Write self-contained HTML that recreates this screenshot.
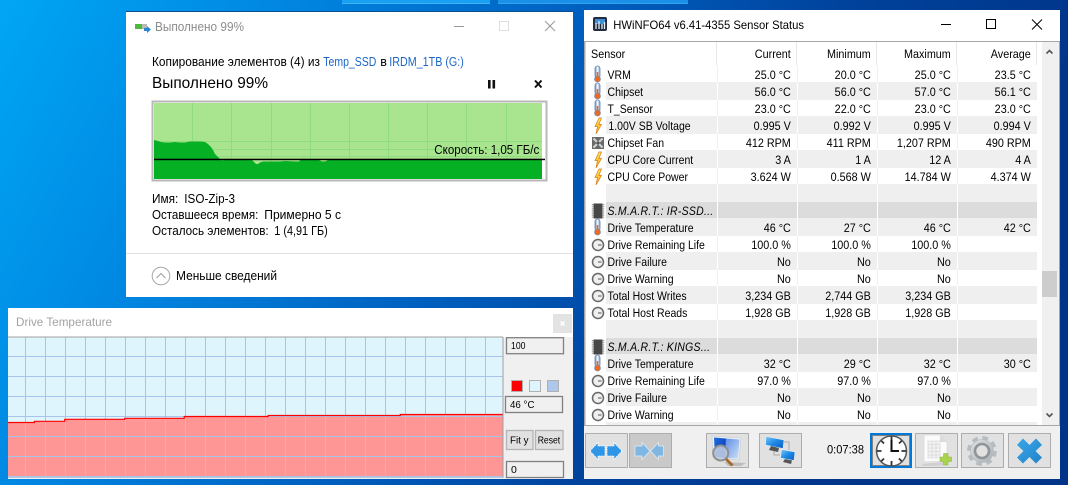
<!DOCTYPE html>
<html lang="ru"><head><meta charset="utf-8"><title>Screens</title>
<style>
html,body{margin:0;padding:0;width:1068px;height:485px;overflow:hidden;background:#0060c0}
svg{display:block;font-family:"Liberation Sans",sans-serif;font-size:12px;fill:#000}
</style></head><body>
<svg xmlns="http://www.w3.org/2000/svg" width="1068" height="485" viewBox="0 0 1068 485">
<defs>
<linearGradient id="bg" x1="0" y1="0" x2="1" y2="0.25">
<stop offset="0" stop-color="#00a6f4"/><stop offset=".25" stop-color="#0087e2"/><stop offset=".5" stop-color="#0062c2"/><stop offset=".75" stop-color="#00429c"/><stop offset="1" stop-color="#003488"/>
</linearGradient>
<linearGradient id="tube" x1="0" y1="0" x2="1" y2="0"><stop offset="0" stop-color="#5f86bb"/><stop offset=".5" stop-color="#ffffff"/><stop offset="1" stop-color="#7c9bc8"/></linearGradient>
<linearGradient id="boltg" x1="0" y1="0" x2="0" y2="1"><stop offset="0" stop-color="#ffe95a"/><stop offset="1" stop-color="#f8a818"/></linearGradient>
<linearGradient id="blueg" x1="0" y1="0" x2="1" y2="1"><stop offset="0" stop-color="#1f6fe0"/><stop offset="1" stop-color="#0a2fae"/></linearGradient>
<linearGradient id="netg" x1="0" y1="0" x2="1" y2="1"><stop offset="0" stop-color="#7cc6f4"/><stop offset=".5" stop-color="#1c8ae6"/><stop offset="1" stop-color="#0c5cc0"/></linearGradient>
<linearGradient id="lightg" x1="0" y1="0" x2="1" y2="1"><stop offset="0" stop-color="#5f8fe8"/><stop offset="1" stop-color="#cfe0f6"/></linearGradient>
<linearGradient id="xg" x1="0" y1="0" x2="1" y2="1"><stop offset="0" stop-color="#3aa6ea"/><stop offset="1" stop-color="#2283c8"/></linearGradient>
<linearGradient id="gearg" x1="0" y1="0" x2="1" y2="1"><stop offset="0" stop-color="#dfe2e4"/><stop offset="1" stop-color="#a8aeb2"/></linearGradient>
<symbol id="th" overflow="visible"><rect x="-2.5" y="-8" width="5" height="12" rx="2.5" fill="url(#tube)" stroke="#5f82b6" stroke-width=".8"/><rect x="-.8" y="-2" width="1.6" height="6" fill="#e8641a"/><circle cx="0" cy="5" r="3" fill="#ee6a1c" stroke="#7c8fb0" stroke-width=".7"/></symbol>
<symbol id="bo" overflow="visible"><path d="M1-8-3 .5H-.5L-2 8 3.500-1.500H.8L3.500-8Z" fill="url(#boltg)" stroke="#d87a14" stroke-width=".7"/></symbol>
<symbol id="ga" overflow="visible"><circle r="5.500" fill="#efefef" stroke="#666" stroke-width="1.500"/><path d="M0 0H3.500" stroke="#555" stroke-width="1"/></symbol>
<symbol id="fa" overflow="visible"><rect x="-6" y="-6" width="12" height="12" fill="#6a6a6a"/><path d="M0 0-4.500-4.500M0 0 4.500-4.500M0 0-4.500 4.500M0 0 4.500 4.500" stroke="#d6d6d6" stroke-width="2"/><circle r="1.600" fill="#555"/></symbol>
<symbol id="ch" overflow="visible"><rect x="-4.500" y="-7.500" width="9" height="15" fill="#474747"/><path d="M-5.500-7V7M5.500-7V7" stroke="#9a9a9a" stroke-width="1.400" stroke-dasharray="1.200 .9"/></symbol>
</defs>

<rect width="1068" height="485" fill="url(#bg)"/>
<rect x="342" y="0" width="148" height="3" fill="#1aa0f2"/><rect x="342" y="3" width="148" height="1" fill="#3fb4f4"/>
<rect x="498" y="0" width="190" height="3" fill="#1a90e8"/><rect x="498" y="3" width="190" height="1" fill="#30a4ee"/>

<!-- Copy window -->
<rect x="126" y="11" width="447" height="1" fill="#0a4f90"/>
<rect x="126" y="12" width="447" height="285" fill="#fff"/>
<rect x="135" y="24" width="7" height="5" fill="#4cbb3c"/><rect x="142" y="24" width="5" height="5" fill="#b9b9b9"/>
<path d="M144 28h3v-2l4 3.500-4 3.500v-2h-3z" fill="#2a86d8"/>
<g font-size="12.500">
<text x="155" y="31" fill="#8c8c8c" textLength="89" lengthAdjust="spacingAndGlyphs">Выполнено 99%</text>
<text x="152" y="66" textLength="168" lengthAdjust="spacingAndGlyphs">Копирование элементов (4) из</text>
<text x="323.300" y="66" fill="#1c66c8" textLength="53" lengthAdjust="spacingAndGlyphs">Temp_SSD</text>
<text x="380.300" y="66">в</text>
<text x="389.300" y="66" fill="#1c66c8" textLength="74.500" lengthAdjust="spacingAndGlyphs">IRDM_1TB (G:)</text>
</g>
<path d="M454 26.500h10" stroke="#999" stroke-width="1"/>
<rect x="499.500" y="21.500" width="9" height="9" fill="none" stroke="#dedede"/>
<path d="M545 21 555 31M555 21 545 31" stroke="#999" stroke-width="1"/>
<text x="152" y="88" font-size="16" textLength="116" lengthAdjust="spacingAndGlyphs">Выполнено 99%</text>
<rect x="488" y="80" width="2.600" height="8.500" fill="#111"/><rect x="492.500" y="80" width="2.600" height="8.500" fill="#111"/>
<path d="M535 80.500 541.500 87.500M541.500 80.500 535 87.500" stroke="#111" stroke-width="2"/>
<!-- copy graph -->
<rect x="152.500" y="101.500" width="394" height="79" fill="#fff" stroke="#b8b8b8" stroke-width="2"/>
<rect x="154" y="103" width="388" height="76" fill="#a9e58f"/>
<path d="M192.500 103V179M231.500 103V179M271.500 103V179M310.500 103V179M349.500 103V179M388.500 103V179M427.500 103V179M466.500 103V179M506.500 103V179M154 141.500H542M195 149.500H542M195 156.500H542" stroke="#8fdc80" stroke-width="1" fill="none"/>
<path d="M154 140 158 141 161 142 165 142.500 170 142.500 175 142 180 142.500 185 142.500 190 141.500 200 141.500 205 142 208 144 211 147 213 150 215 154 218 157 220 159 222 160.500 224 160 252 160 254 162 256 164 258 164 260 162.500 263 161.500 270 161.500 280 161.500 285 161 295 161.500 299 161.500 301 159.500 304 158.500 306 159.500 308 160 319 160 322 161.500 325 161.500 328 160 542 160 542 179 154 179Z" fill="#06b025"/>
<rect x="154" y="158.700" width="391" height="1.500" fill="#000"/>
<!-- info -->
<g font-size="12.500">
<text x="434.300" y="154" textLength="105" lengthAdjust="spacingAndGlyphs">Скорость: 1,05 ГБ/с</text>
<text x="152" y="203" textLength="26.300" lengthAdjust="spacingAndGlyphs">Имя:</text>
<text x="184.300" y="203" textLength="50.700" lengthAdjust="spacingAndGlyphs">ISO-Zip-3</text>
<text x="152" y="219" textLength="106.300" lengthAdjust="spacingAndGlyphs">Оставшееся время:</text>
<text x="264.300" y="219" textLength="76.700" lengthAdjust="spacingAndGlyphs">Примерно 5 с</text>
<text x="152" y="235" textLength="116.700" lengthAdjust="spacingAndGlyphs">Осталось элементов:</text>
<text x="274.300" y="235" textLength="53.400" lengthAdjust="spacingAndGlyphs">1 (4,91 ГБ)</text>
<text x="176" y="280" textLength="101" lengthAdjust="spacingAndGlyphs">Меньше сведений</text>
</g>
<rect x="126" y="253" width="447" height="1" fill="#e2e2e2"/>
<circle cx="161" cy="276" r="8.800" fill="#fff" stroke="#a8a8a8" stroke-width="1"/>
<path d="M156.500 278 161 273.500 165.500 278" fill="none" stroke="#a0a0a0" stroke-width="1.100"/>

<!-- Drive Temperature -->
<rect x="8" y="308" width="565" height="171" fill="#f0f0f0"/>
<rect x="8" y="308" width="565" height="29" fill="#fff"/>
<text x="16" y="326" fill="#a3a3a3" textLength="96" lengthAdjust="spacingAndGlyphs">Drive Temperature</text>
<rect x="553" y="314" width="19" height="19" fill="#e3e3e3"/>
<path d="M560.500 321.500 564.500 325.500M564.500 321.500 560.500 325.500" stroke="#fff" stroke-width="1.400"/>
<rect x="8" y="337" width="495" height="140" fill="#dff5fd"/>
<path d="M8 423 34.400 423 34.400 421.500 64.700 421.500 64.700 419.500 124.700 419.500 124.700 418.500 184.200 418.500 184.200 416.500 268.200 416.500 268.200 415.700 400.300 415.700 400.300 414.700 503 414.700 503 477 8 477Z" fill="#ff9696"/>
<path d="M25.500 337V477M45.500 337V477M65.500 337V477M85.500 337V477M105.500 337V477M125.500 337V477M145.500 337V477M165.500 337V477M185.500 337V477M205.500 337V477M225.500 337V477M245.500 337V477M265.500 337V477M285.500 337V477M305.500 337V477M325.500 337V477M345.500 337V477M365.500 337V477M385.500 337V477M405.500 337V477M425.500 337V477M445.500 337V477M465.500 337V477M485.500 337V477M8 356.500H503M8 376.500H503M8 396.500H503M8 416.500H503M8 436.500H503M8 456.500H503M8 476.500H503" stroke="#a9c4ea" stroke-width="1" fill="none"/>
<path d="M8 422.500H34.400V421.300H64.700V419.300H124.700V418.300H184.200V416.500H268.200V415.500H400.300V414.500H503" fill="none" stroke="#f00" stroke-width="1.200"/>
<rect x="8" y="336.500" width="495" height="1" fill="#a0a0a0"/><rect x="502.500" y="337" width="1" height="141" fill="#a0a0a0"/><rect x="8" y="477" width="495" height="1" fill="#b8c8dc"/>
<g fill="#f0f0f0" stroke="#808080" stroke-width="1.300">
<rect x="506.500" y="337.700" width="57" height="16"/>
<rect x="505.500" y="396.500" width="57" height="16"/>
<rect x="506.500" y="461.500" width="57" height="16"/></g>
<g fill="#e1e1e1" stroke="#b4b4b4" stroke-width="1.300"><rect x="506.500" y="430.500" width="26.500" height="19"/><rect x="535.500" y="430.500" width="27.500" height="19"/></g>
<g font-size="10.500">
<text x="511" y="349" textLength="14.500" lengthAdjust="spacingAndGlyphs">100</text><text x="510" y="408" textLength="24.500" lengthAdjust="spacingAndGlyphs">46 °C</text><text x="511" y="473">0</text>
<text x="510" y="443.500" textLength="18.500" lengthAdjust="spacingAndGlyphs">Fit y</text>
<text x="537.700" y="443.500" textLength="22.500" lengthAdjust="spacingAndGlyphs">Reset</text>
</g>
<rect x="511.500" y="380.500" width="11" height="11" fill="#f00" stroke="#b0b0b0"/>
<rect x="529.500" y="380.500" width="11" height="11" fill="#dff5fd" stroke="#b0b0b0"/>
<rect x="547.500" y="380.500" width="11" height="11" fill="#adc8ea" stroke="#b0b0b0"/>

<!-- HWiNFO window -->
<rect x="584" y="10" width="476" height="469" fill="#fff"/>
<rect x="593" y="17" width="14" height="14" rx="2" fill="#222c3c"/>
<path d="M595 19h10v5h-10z" fill="#3f8fd8"/><path d="M596 29v-6M599 29v-8M602 29v-5M604.500 29v-7" stroke="#e6eef8" stroke-width="1.300"/>
<text x="613.300" y="29" textLength="190.700" lengthAdjust="spacingAndGlyphs">HWiNFO64 v6.41-4355 Sensor Status</text>
<path d="M941 24.500h10" stroke="#000" stroke-width="1"/>
<rect x="986.500" y="19.500" width="9" height="9" fill="none" stroke="#000"/>
<path d="M1032 19.500 1042 29.500M1042 19.500 1032 29.500" stroke="#000" stroke-width="1"/>
<rect x="584" y="41" width="476" height="1" fill="#a6a6a6"/>
<rect x="584" y="41" width="1.500" height="385" fill="#a6a6a6"/>
<rect x="584" y="425" width="476" height="54" fill="#f0f0f0"/>
<rect x="584" y="425" width="476" height="1" fill="#a6a6a6"/>
<rect x="1059" y="41" width="1" height="385" fill="#a6a6a6"/>
<rect x="1042" y="42" width="17" height="383" fill="#f0f0f0"/>
<rect x="1042" y="271" width="15" height="26" fill="#cdcdcd"/>
<path d="M1046.500 53.500 1049.500 50.500 1052.500 53.500" fill="none" stroke="#555" stroke-width="1.600"/>
<path d="M1046.500 413.500 1049.500 416.500 1052.500 413.500" fill="none" stroke="#555" stroke-width="1.600"/>
<path d="M716.500 42V65M796.500 42V65M876.500 42V65M956.500 42V65M1036.500 42V65" stroke="#e6e6e6"/>
<!-- rows -->
<g fill="#efefef">
<rect x="606" y="82" width="431" height="18"/><rect x="606" y="116" width="431" height="18"/><rect x="606" y="150" width="431" height="18"/>
<rect x="606" y="184" width="431" height="18"/>
<rect x="606" y="218" width="431" height="18"/><rect x="606" y="252" width="431" height="18"/><rect x="606" y="286" width="431" height="18"/>
<rect x="606" y="320" width="431" height="18"/>
<rect x="606" y="354" width="431" height="18"/><rect x="606" y="388" width="431" height="18"/><rect x="606" y="422" width="431" height="3"/>
</g>
<g fill="#dcdcdc"><rect x="606" y="202" width="431" height="16"/><rect x="606" y="338" width="431" height="16"/></g>
<path d="M717.500 66V425M797.500 66V425M877.500 66V425M957.500 66V425" stroke="#fff"/>
<path d="M717.500 66V82M797.500 66V82M877.500 66V82M957.500 66V82M717.500 100V116M797.500 100V116M877.500 100V116M957.500 100V116M717.500 134V150M797.500 134V150M877.500 134V150M957.500 134V150M717.500 168V184M797.500 168V184M877.500 168V184M957.500 168V184M717.500 236V252M797.500 236V252M877.500 236V252M957.500 236V252M717.500 270V286M797.500 270V286M877.500 270V286M957.500 270V286M717.500 304V320M797.500 304V320M877.500 304V320M957.500 304V320M717.500 372V388M797.500 372V388M877.500 372V388M957.500 372V388M717.500 406V422M797.500 406V422M877.500 406V422M957.500 406V422" stroke="#f0f0f0"/>
<!-- row icons -->
<use href="#th" x="597.500" y="74"/><use href="#th" x="597.500" y="91"/><use href="#th" x="597.500" y="108"/>
<use href="#bo" x="598" y="126"/><use href="#fa" x="598" y="143"/><use href="#bo" x="598" y="160"/><use href="#bo" x="598" y="177"/>
<use href="#ch" x="598" y="211"/><use href="#th" x="597.500" y="227"/>
<use href="#ga" x="598" y="245"/><use href="#ga" x="598" y="262"/><use href="#ga" x="598" y="279"/><use href="#ga" x="598" y="296"/><use href="#ga" x="598" y="313"/>
<use href="#ch" x="598" y="347"/><use href="#th" x="597.500" y="363"/>
<use href="#ga" x="598" y="381"/><use href="#ga" x="598" y="398"/><use href="#ga" x="598" y="415"/>

<g transform="translate(591,0) scale(.9,1)"><text y="58">Sensor</text></g>
<g transform="translate(607.500,0) scale(.875,1)">
<text y="79">VRM</text><text y="96">Chipset</text><text y="113">T_Sensor</text><text y="130" x="1">1.00V SB Voltage</text><text y="147">Chipset Fan</text><text y="164">CPU Core Current</text><text y="181">CPU Core Power</text>
<text y="215" font-style="italic" letter-spacing=".3">S.M.A.R.T.: IR-SSD...</text>
<text y="232">Drive Temperature</text><text y="249">Drive Remaining Life</text><text y="266">Drive Failure</text><text y="283">Drive Warning</text><text y="300">Total Host Writes</text><text y="317">Total Host Reads</text>
<text y="351" font-style="italic" letter-spacing=".3">S.M.A.R.T.: KINGS...</text>
<text y="368">Drive Temperature</text><text y="385">Drive Remaining Life</text><text y="402">Drive Failure</text><text y="419">Drive Warning</text>
</g>
<g transform="translate(790.800,0) scale(.9,1)" text-anchor="end">
<text y="58">Current</text>
<text y="79">25.0 °C</text><text y="96">56.0 °C</text><text y="113">23.0 °C</text><text y="130">0.995 V</text><text y="147">412 RPM</text><text y="164">3 A</text><text y="181">3.624 W</text>
<text y="232">46 °C</text><text y="249">100.0 %</text><text y="266">No</text><text y="283">No</text><text y="300">3,234 GB</text><text y="317">1,928 GB</text>
<text y="368">32 °C</text><text y="385">97.0 %</text><text y="402">No</text><text y="419">No</text>
</g>
<g transform="translate(870.800,0) scale(.9,1)" text-anchor="end">
<text y="58">Minimum</text>
<text y="79">20.0 °C</text><text y="96">56.0 °C</text><text y="113">22.0 °C</text><text y="130">0.992 V</text><text y="147">411 RPM</text><text y="164">1 A</text><text y="181">0.568 W</text>
<text y="232">27 °C</text><text y="249">100.0 %</text><text y="266">No</text><text y="283">No</text><text y="300">2,744 GB</text><text y="317">1,928 GB</text>
<text y="368">29 °C</text><text y="385">97.0 %</text><text y="402">No</text><text y="419">No</text>
</g>
<g transform="translate(950.800,0) scale(.9,1)" text-anchor="end">
<text y="58">Maximum</text>
<text y="79">25.0 °C</text><text y="96">57.0 °C</text><text y="113">23.0 °C</text><text y="130">0.995 V</text><text y="147">1,207 RPM</text><text y="164">12 A</text><text y="181">14.784 W</text>
<text y="232">46 °C</text><text y="249">100.0 %</text><text y="266">No</text><text y="283">No</text><text y="300">3,234 GB</text><text y="317">1,928 GB</text>
<text y="368">32 °C</text><text y="385">97.0 %</text><text y="402">No</text><text y="419">No</text>
</g>
<g transform="translate(1030.800,0) scale(.9,1)" text-anchor="end">
<text y="58">Average</text>
<text y="79">23.5 °C</text><text y="96">56.1 °C</text><text y="113">23.0 °C</text><text y="130">0.994 V</text><text y="147">490 RPM</text><text y="164">4 A</text><text y="181">4.374 W</text>
<text y="232">42 °C</text><text y="368">30 °C</text>
</g>

<!-- toolbar -->
<g stroke="#adadad" fill="#e1e1e1">
<rect x="585.500" y="433.500" width="42" height="34"/>
<rect x="629.500" y="433.500" width="42" height="34" fill="#c9c9c9"/>
<rect x="706.500" y="433.500" width="42" height="34"/>
<rect x="759.500" y="433.500" width="42" height="34"/>
<rect x="915.500" y="433.500" width="42" height="34"/>
<rect x="961.500" y="433.500" width="42" height="34"/>
<rect x="1008.500" y="433.500" width="42" height="34"/>
</g>
<g fill="#2f95e6" stroke="#fff" stroke-width=".8" stroke-dasharray="1.500 .8">
<path d="M590 451 598 442.500V446H605V456H598V459.500Z"/><path d="M622 451 614 442.500V446H607V456H614V459.500Z"/></g>
<g fill="#80b6e2" stroke="#e6eef5" stroke-width=".7">
<path d="M650 451 642 442.500V446H635V456H642V459.500Z"/><path d="M650.500 451 658.500 442.500V446H663.500V456H658.500V459.500Z"/></g>
<!-- magnifier button -->
<path d="M712 436 741 438 739 460 713 457Z" fill="#eef2f8" stroke="#cfcfcf" stroke-width=".8"/>
<path d="M714 437.500 726 438.500 725.500 458 715 456.500Z" fill="url(#blueg)"/>
<path d="M726 438.500 739.500 439.500 738 458.500 725.500 458Z" fill="url(#lightg)"/>
<path d="M724 462 746 463 741 466 728 466Z" fill="#bdbdbd"/>
<circle cx="720.700" cy="453" r="7.500" fill="#bccbe0" fill-opacity=".9" stroke="#8f8f8f" stroke-width="2"/>
<path d="M726 459 732.500 465.500" stroke="#a36a2c" stroke-width="2.800"/>
<!-- network button -->
<path d="M783 442H789V450M774 450V455H780" fill="none" stroke="#aaa" stroke-width="1"/>
<path d="M766 436.500 784 440 783 448.500 765.500 445Z" fill="url(#netg)" stroke="#e4eef8" stroke-width=".6"/>
<path d="M771 446 779 448 778 452 769 450Z" fill="#555"/>
<path d="M781.500 449.500 795 452 794 460.500 780.500 458Z" fill="url(#netg)" stroke="#e4eef8" stroke-width=".6"/>
<path d="M785 459 792 460.500 791 464 783 462Z" fill="#555"/>
<text x="827" y="453.500" textLength="37" lengthAdjust="spacingAndGlyphs">0:07:38</text>
<!-- clock button -->
<rect x="871" y="434" width="40" height="33" fill="#e1e1e1" stroke="#0078d7" stroke-width="2"/>
<rect x="872.500" y="435.500" width="37" height="30" fill="none" stroke="#222" stroke-width="1" stroke-dasharray="1 1"/>
<circle cx="891.500" cy="451" r="15" fill="#fff" stroke="#555" stroke-width="1.500"/>
<path d="M891.500 436.500V441M891.500 461V465.500M877 451H881.500M901.500 451H906M881.300 440.800 884 443.500M899 458.500 901.700 461.200M881.300 461.200 884 458.500M899 443.500 901.700 440.800" stroke="#333" stroke-width="1.800"/>
<path d="M891.500 451.500V440M890.500 451H899" stroke="#111" stroke-width="2"/>
<!-- doc button -->
<path d="M921 464 947 462 948 465 924 466Z" fill="#cfcfcf"/>
<path d="M924 435H940L947 442V461L924 462Z" fill="#fbfbfb" stroke="#dadada" stroke-width=".8"/>
<path d="M940 435V442H947Z" fill="#dcdcdc"/>
<path d="M928 441H940V458H928ZM928 444.500H940M928 448H940M928 451.500H940M928 455H940M932 441V458M936 441V458" fill="#f2f2f2" stroke="#cfcfcf" stroke-width=".6"/>
<path d="M940 457H943.500V453.500H948V457H951.500V461.500H948V465H943.500V461.500H940Z" fill="#a9d24e" stroke="#8cb53c" stroke-width=".5"/>
<!-- gear button -->
<circle cx="982" cy="451" r="12.700" fill="none" stroke="#b6bcc0" stroke-width="4.500" stroke-dasharray="5.500 4.480"/>
<circle cx="982" cy="451" r="11.500" fill="url(#gearg)" stroke="#b4b8bb" stroke-width=".6"/>
<circle cx="982" cy="451" r="7" fill="#e1e1e1" stroke="#8e9498" stroke-width="2.600"/>
<!-- x button -->
<path d="M1017 445 1023 438.500 1029.500 445 1036 438.500 1042 445 1035.500 451 1042 457.500 1036 463.500 1029.500 457 1023 463.500 1017 457.500 1023.500 451Z" fill="url(#xg)"/>
</svg>
</body></html>
